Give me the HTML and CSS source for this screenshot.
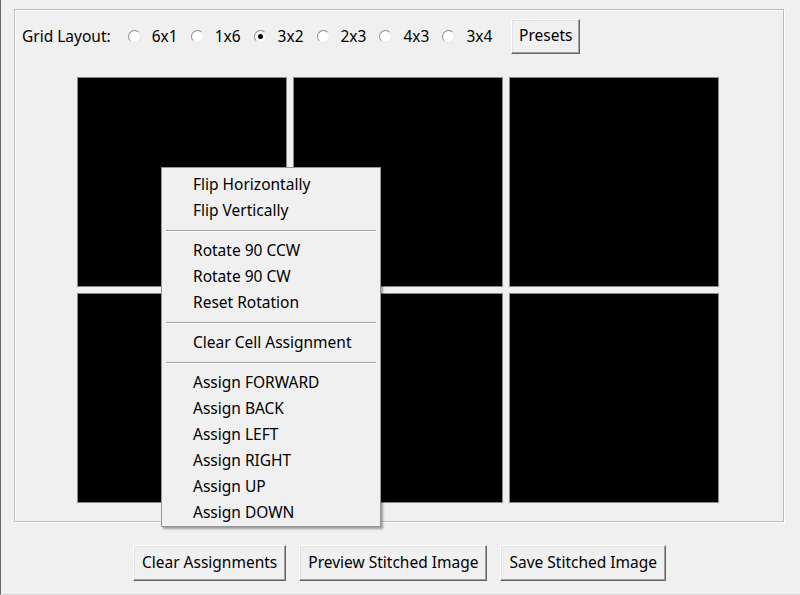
FILE: index.html
```html
<!DOCTYPE html>
<html>
<head>
<meta charset="utf-8">
<link rel="stylesheet" href="styles.css">
</head>
<body>
<div class="window">
  <div class="frame">
    <div class="toolbar">
      <span class="label">Grid Layout:</span>
      <span class="radio"><span class="dot"></span><span class="rlabel">6x1</span></span>
      <span class="radio"><span class="dot"></span><span class="rlabel">1x6</span></span>
      <span class="radio"><span class="dot checked"></span><span class="rlabel">3x2</span></span>
      <span class="radio"><span class="dot"></span><span class="rlabel">2x3</span></span>
      <span class="radio"><span class="dot"></span><span class="rlabel">4x3</span></span>
      <span class="radio"><span class="dot"></span><span class="rlabel">3x4</span></span>
      <button class="btn presets">Presets</button>
    </div>
    <div class="grid">
      <div class="cell"></div>
      <div class="cell"></div>
      <div class="cell"></div>
      <div class="cell"></div>
      <div class="cell"></div>
      <div class="cell"></div>
    </div>
  </div>
  <div class="actions">
    <button class="btn wide">Clear Assignments</button>
    <button class="btn wide">Preview Stitched Image</button>
    <button class="btn wide">Save Stitched Image</button>
  </div>
  <div class="menu">
    <div class="item">Flip Horizontally</div>
    <div class="item">Flip Vertically</div>
    <div class="sep"></div>
    <div class="item">Rotate 90 CCW</div>
    <div class="item">Rotate 90 CW</div>
    <div class="item">Reset Rotation</div>
    <div class="sep"></div>
    <div class="item">Clear Cell Assignment</div>
    <div class="sep"></div>
    <div class="item">Assign FORWARD</div>
    <div class="item">Assign BACK</div>
    <div class="item">Assign LEFT</div>
    <div class="item">Assign RIGHT</div>
    <div class="item">Assign UP</div>
    <div class="item">Assign DOWN</div>
  </div>
</div>
</body>
</html>
```

FILE: styles.css
```css
html, body {
  margin: 0;
  padding: 0;
  background: #f0f0f0;
}
body {
  width: 800px;
  height: 595px;
  overflow: hidden;
  font-family: "Noto Sans", "Open Sans", sans-serif;
  font-size: 15.5px;
  color: #000;
}
.window {
  position: relative;
  width: 800px;
  height: 595px;
  box-sizing: border-box;
  border-left: 1px solid #6a6a6a;
  border-bottom: 1px solid #d6d6d6;
  padding-top: 9px;
}
.frame {
  margin-left: 13px;
  width: 770px;
  height: 513px;
  box-sizing: border-box;
  border: 1px solid #bdbdbd;
  box-shadow: inset 1px 1px 0 #ffffff, 1px 1px 0 #ffffff;
  padding: 9px 0 0 7px;
  display: flex;
  flex-direction: column;
}
.toolbar {
  display: flex;
  align-items: center;
  height: 34px;
}
.label {
  margin-right: 17px;
}
.radio {
  display: flex;
  align-items: center;
  margin-right: 13px;
}
.dot {
  width: 11px;
  height: 11px;
  border-radius: 50%;
  background: #fff;
  border: 1px solid;
  border-color: #8c8c8c #e6e6e6 #e6e6e6 #8c8c8c;
  margin-right: 11px;
  position: relative;
}
.dot.checked::after {
  content: "";
  position: absolute;
  left: 3px;
  top: 3px;
  width: 5px;
  height: 5px;
  border-radius: 50%;
  background: #000;
}
.btn {
  font-family: inherit;
  font-size: 15.5px;
  color: #000;
  background: #f0f0f0;
  border: 1px solid;
  border-color: #ffffff #646464 #646464 #ffffff;
  box-shadow: inset -1px -1px 0 #a0a0a0, inset 1px 1px 0 #e3e3e3;
  height: 35px;
  padding: 0 8px 2px;
  margin: 0;
}
.presets {
  margin-left: 6px;
  width: 69px;
  padding: 0 0 2px;
}
.grid {
  margin-top: 24px;
  margin-left: 55px;
  display: grid;
  grid-template-columns: 210px 210px 210px;
  grid-template-rows: 210px 210px;
  gap: 6px;
}
.cell {
  background: #000;
  border: 1px solid #8a8a8a;
}
.actions {
  display: flex;
  justify-content: center;
  gap: 13px;
  margin-top: 23px;
  padding-right: 2px;
}
.wide {
  height: 36px;
  padding: 0 8px 2px;
}
.menu {
  position: absolute;
  left: 160px;
  top: 167px;
  width: 220px;
  height: 360px;
  box-sizing: border-box;
  background: #f0f0f0;
  border: 1px solid #979797;
  box-shadow: 2px 2px 2px rgba(0, 0, 0, 0.35);
  padding: 3px 2px 2px 2px;
}
.item {
  height: 26px;
  line-height: 26px;
  padding-left: 29px;
  white-space: nowrap;
}
.sep {
  height: 14px;
  display: flex;
  align-items: center;
  padding: 0 2px;
}
.sep::before {
  content: "";
  flex: 1;
  height: 1px;
  background: #a0a0a0;
  box-shadow: 0 1px 0 #ffffff;
}
```
